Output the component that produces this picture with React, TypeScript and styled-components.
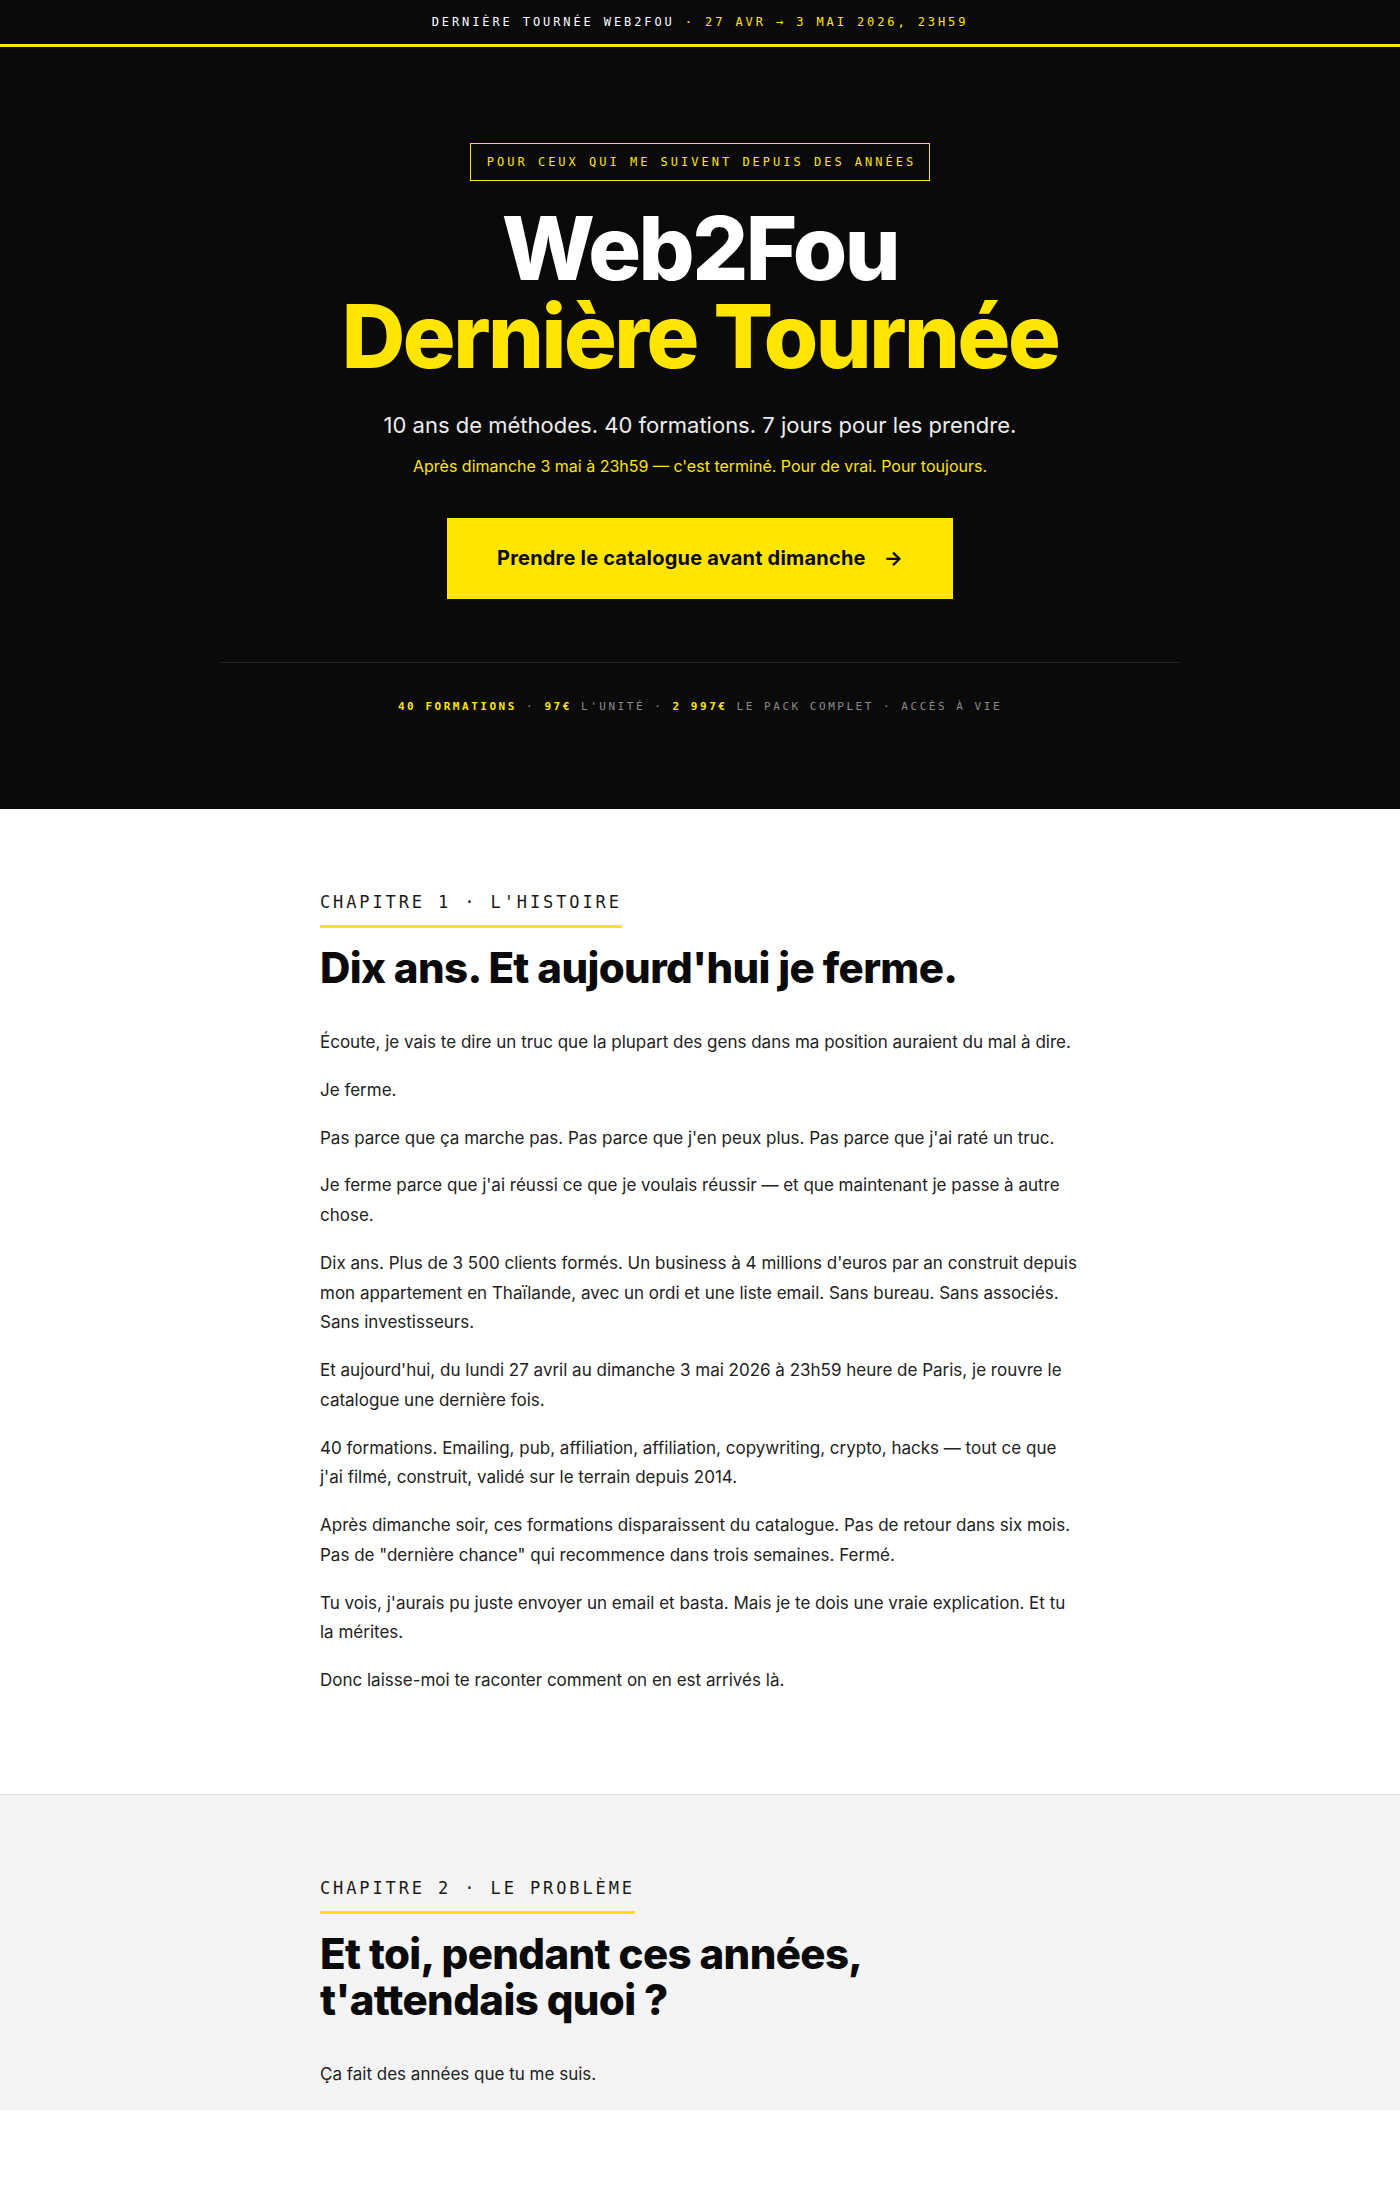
import styled, { createGlobalStyle } from "styled-components";

const YELLOW = "#ffe500";
const INK = "#0a0a0a";
const MONO = `"DejaVu Sans Mono", "Liberation Mono", monospace`;

const GlobalStyle = createGlobalStyle`
  * {
    box-sizing: border-box;
  }
  body {
    margin: 0;
    background: #ffffff;
    font-family: "Inter", "Noto Sans", sans-serif;
    color: ${INK};
  }
`;

type Paragraphs = string[];

const chapterOne: Paragraphs = [
  "Écoute, je vais te dire un truc que la plupart des gens dans ma position auraient du mal à dire.",
  "Je ferme.",
  "Pas parce que ça marche pas. Pas parce que j'en peux plus. Pas parce que j'ai raté un truc.",
  "Je ferme parce que j'ai réussi ce que je voulais réussir — et que maintenant je passe à autre chose.",
  "Dix ans. Plus de 3 500 clients formés. Un business à 4 millions d'euros par an construit depuis mon appartement en Thaïlande, avec un ordi et une liste email. Sans bureau. Sans associés. Sans investisseurs.",
  "Et aujourd'hui, du lundi 27 avril au dimanche 3 mai 2026 à 23h59 heure de Paris, je rouvre le catalogue une dernière fois.",
  "40 formations. Emailing, pub, affiliation, affiliation, copywriting, crypto, hacks — tout ce que j'ai filmé, construit, validé sur le terrain depuis 2014.",
  "Après dimanche soir, ces formations disparaissent du catalogue. Pas de retour dans six mois. Pas de \"dernière chance\" qui recommence dans trois semaines. Fermé.",
  "Tu vois, j'aurais pu juste envoyer un email et basta. Mais je te dois une vraie explication. Et tu la mérites.",
  "Donc laisse-moi te raconter comment on en est arrivés là.",
];

const chapterTwo: Paragraphs = ["Ça fait des années que tu me suis."];

export default function App() {
  return (
    <>
      <GlobalStyle />
      <TopBar>
        DERNIÈRE TOURNÉE WEB2FOU <Accent>· 27 AVR → 3 MAI 2026, 23H59</Accent>
      </TopBar>

      <Hero>
        <Badge>POUR CEUX QUI ME SUIVENT DEPUIS DES ANNÉES</Badge>
        <Title>
          <span>Web2Fou</span>
          <TitleAccent>Dernière Tournée</TitleAccent>
        </Title>
        <Lead>10 ans de méthodes. 40 formations. 7 jours pour les prendre.</Lead>
        <Deadline>
          Après dimanche 3 mai à 23h59 — c'est terminé. Pour de vrai. Pour
          toujours.
        </Deadline>
        <Cta type="button">
          Prendre le catalogue avant dimanche
          <Arrow>→</Arrow>
        </Cta>
        <Stats>
          <Strong>40 FORMATIONS</Strong> · <Strong>97€</Strong> L'UNITÉ ·{" "}
          <Strong>2 997€</Strong> LE PACK COMPLET · ACCÈS À VIE
        </Stats>
      </Hero>

      <Chapter>
        <Inner>
          <Label>CHAPITRE 1 · L'HISTOIRE</Label>
          <Heading>Dix ans. Et aujourd'hui je ferme.</Heading>
          {chapterOne.map((p, i) => (
            <Text key={i}>{p}</Text>
          ))}
        </Inner>
      </Chapter>

      <Chapter $grey $tail>
        <Inner>
          <Label>CHAPITRE 2 · LE PROBLÈME</Label>
          <Heading>
            Et toi, pendant ces années,
            <br />
            t'attendais quoi ?
          </Heading>
          {chapterTwo.map((p, i) => (
            <Text key={i}>{p}</Text>
          ))}
        </Inner>
      </Chapter>
    </>
  );
}

// TOP BAR

const TopBar = styled.div`
  height: 47px;
  display: flex;
  align-items: center;
  justify-content: center;
  background: ${INK};
  border-bottom: 3px solid ${YELLOW};
  color: #ffffff;
  font-family: ${MONO};
  font-size: 12px;
  letter-spacing: 2.9px;
  white-space: pre;
`;

const Accent = styled.span`
  color: ${YELLOW};
`;

// HERO

const Hero = styled.header`
  background: ${INK};
  padding: 96px 20px 94px;
  display: flex;
  flex-direction: column;
  align-items: center;
  text-align: center;
`;

const Badge = styled.div`
  border: 1px solid ${YELLOW};
  padding: 10px 13px 10px 16px;
  color: ${YELLOW};
  font-family: ${MONO};
  font-size: 12px;
  line-height: 16px;
  letter-spacing: 0.25em;
`;

const Title = styled.h1`
  margin: 23px 0 29px;
  display: flex;
  flex-direction: column;
  color: #ffffff;
  font-size: 88px;
  font-weight: 800;
  line-height: 1;
  letter-spacing: -0.028em;
`;

const TitleAccent = styled.span`
  color: ${YELLOW};
`;

const Lead = styled.p`
  margin: 0 0 12px;
  color: #ececec;
  font-size: 22px;
  line-height: 1.5;
`;

const Deadline = styled.p`
  margin: 0 0 40px;
  color: ${YELLOW};
  font-size: 16px;
  line-height: 1.5;
`;

const Cta = styled.button`
  display: flex;
  align-items: center;
  padding: 28px 50px;
  border: none;
  background: ${YELLOW};
  color: ${INK};
  font-family: "Inter", sans-serif;
  font-size: 20px;
  font-weight: 700;
  line-height: 25px;
  letter-spacing: 0.2px;
  cursor: pointer;
`;

const Arrow = styled.span`
  margin-left: 18px;
  font-weight: 700;
`;

const Stats = styled.div`
  width: 100%;
  max-width: 960px;
  margin-top: 63px;
  padding-top: 36px;
  border-top: 1px solid #232323;
  color: #8a8a8a;
  font-family: ${MONO};
  font-size: 11px;
  line-height: 16px;
  letter-spacing: 0.23em;
`;

const Strong = styled.b`
  color: ${YELLOW};
  font-weight: 700;
`;

// CHAPTERS

const Chapter = styled.section<{ $grey?: boolean; $tail?: boolean }>`
  padding: 81px 20px ${(p) => (p.$tail ? "2px" : "80px")};
  background: ${(p) => (p.$grey ? "#f4f4f4" : "#ffffff")};
  border-top: ${(p) => (p.$grey ? "1px solid #e2e2e2" : "none")};
`;

const Inner = styled.div`
  max-width: 760px;
  margin: 0 auto;
  display: flex;
  flex-direction: column;
  align-items: flex-start;
`;

const Label = styled.div`
  padding-bottom: 11px;
  border-bottom: 3px solid ${YELLOW};
  color: #1a1a1a;
  font-family: ${MONO};
  font-size: 17px;
  line-height: 24px;
  letter-spacing: 0.17em;
`;

const Heading = styled.h2`
  margin: 17px 0 37px;
  color: ${INK};
  font-size: 42px;
  font-weight: 800;
  line-height: 1.1;
  letter-spacing: -0.015em;
`;

const Text = styled.p`
  margin: 0 0 18px;
  color: #222222;
  font-size: 17px;
  line-height: 1.75;
`;
